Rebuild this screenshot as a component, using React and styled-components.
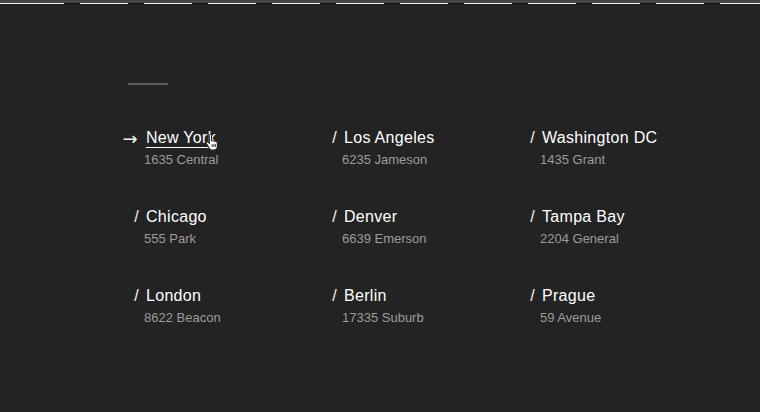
import React from "react";
import styled, { createGlobalStyle } from "styled-components";

const GlobalStyle = createGlobalStyle`
  html, body {
    margin: 0;
    padding: 0;
    background: #232323;
  }
  body {
    font-family: "Liberation Sans", Arial, sans-serif;
  }
`;

const Page = styled.div`
  min-height: 412px;
  background: #232323;
  overflow: hidden;
`;

const TopStrip = styled.div`
  height: 3px;
  background: #454545;
`;

const DashLine = styled.div`
  height: 1px;
  background:
    linear-gradient(#f2f2f2, #f2f2f2) 0 0 / 16px 100% no-repeat,
    repeating-linear-gradient(to right, #0e0e0e 0 16px, #f2f2f2 16px 64px) 0 0 / 100% 100%;
`;

const Content = styled.main`
  padding: 79px 0 0 128px;
`;

const Rule = styled.div`
  width: 40px;
  height: 2px;
  background: #5a5a5a;
`;

const Grid = styled.ul`
  list-style: none;
  margin: 42px 0 0;
  padding: 0 0 0 16px;
  display: grid;
  grid-template-columns: repeat(3, 198px);
  row-gap: 38px;
`;

const Item = styled.li`
  display: flex;
  flex-direction: column;
`;

const NameRow = styled.div`
  position: relative;
  display: flex;
  align-items: center;
  height: 20px;
  padding: 1px 0 0 2px;
  font-size: 16px;
  color: #ffffff;
  letter-spacing: 0.3px;
`;

const Prefix = styled.span`
  display: flex;
  justify-content: flex-end;
  box-sizing: border-box;
  padding-right: ${(p) => (p.$arrow ? "8px" : "7px")};
  width: ${(p) => (p.$arrow ? "26px" : "17px")};
  margin-left: ${(p) => (p.$arrow ? "-26px" : "-17px")};
  font-family: ${(p) => (p.$arrow ? '"DejaVu Sans", sans-serif' : "inherit")};
  font-size: ${(p) => (p.$arrow ? "18px" : "16px")};
  color: #f4f4f4;
`;

const Name = styled.a`
  color: #ffffff;
  text-decoration: ${(p) => (p.$active ? "underline" : "none")};
  text-decoration-thickness: 1px;
  text-underline-offset: 4px;
  white-space: nowrap;
`;

const Address = styled.div`
  margin-top: 4px;
  height: 16px;
  line-height: 16px;
  font-size: 13px;
  color: #9c9c9c;
  white-space: nowrap;
`;

const Cursor = styled.svg`
  position: absolute;
  left: 61px;
  top: 7px;
  width: 14px;
  height: 16px;
`;

const offices = [
  { city: "New York", street: "1635 Central", active: true },
  { city: "Los Angeles", street: "6235 Jameson" },
  { city: "Washington DC", street: "1435 Grant" },
  { city: "Chicago", street: "555 Park" },
  { city: "Denver", street: "6639 Emerson" },
  { city: "Tampa Bay", street: "2204 General" },
  { city: "London", street: "8622 Beacon" },
  { city: "Berlin", street: "17335 Suburb" },
  { city: "Prague", street: "59 Avenue" },
];

function HandCursor() {
  return (
    <Cursor viewBox="0 0 13 15">
      <path
        d="M4 1.2c0-.6.4-1 1-1s1 .4 1 1V6.5c.4-.4 1.2-.4 1.5.2.4-.4 1.2-.3 1.5.2.5-.3 1.2-.1 1.4.4.6 0 1.1.4 1.1 1v3.1c0 1.8-1.4 3.6-3.4 3.6H6.8c-1.2 0-2-.6-2.6-1.5L1.4 9.1c-.4-.6-.2-1.3.3-1.6.5-.3 1.1-.1 1.5.4L4 9V1.2z"
        fill="#ffffff"
        stroke="#111111"
        strokeWidth="0.9"
        strokeLinejoin="round"
      />
      <path d="M6.6 9.5v2.6M8.2 9.5v2.6M9.8 9.5v2.6" stroke="#111111" strokeWidth="0.8" />
    </Cursor>
  );
}

export default function App() {
  return (
    <Page>
      <GlobalStyle />
      <TopStrip />
      <DashLine />
      <Content>
        <Rule />
        <Grid>
          {offices.map((o) => (
            <Item key={o.city}>
              <NameRow>
                <Prefix $arrow={o.active}>{o.active ? "→" : "/"}</Prefix>
                <Name href="#" $active={o.active}>
                  {o.city}
                </Name>
                {o.active && <HandCursor />}
              </NameRow>
              <Address>{o.street}</Address>
            </Item>
          ))}
        </Grid>
      </Content>
    </Page>
  );
}
